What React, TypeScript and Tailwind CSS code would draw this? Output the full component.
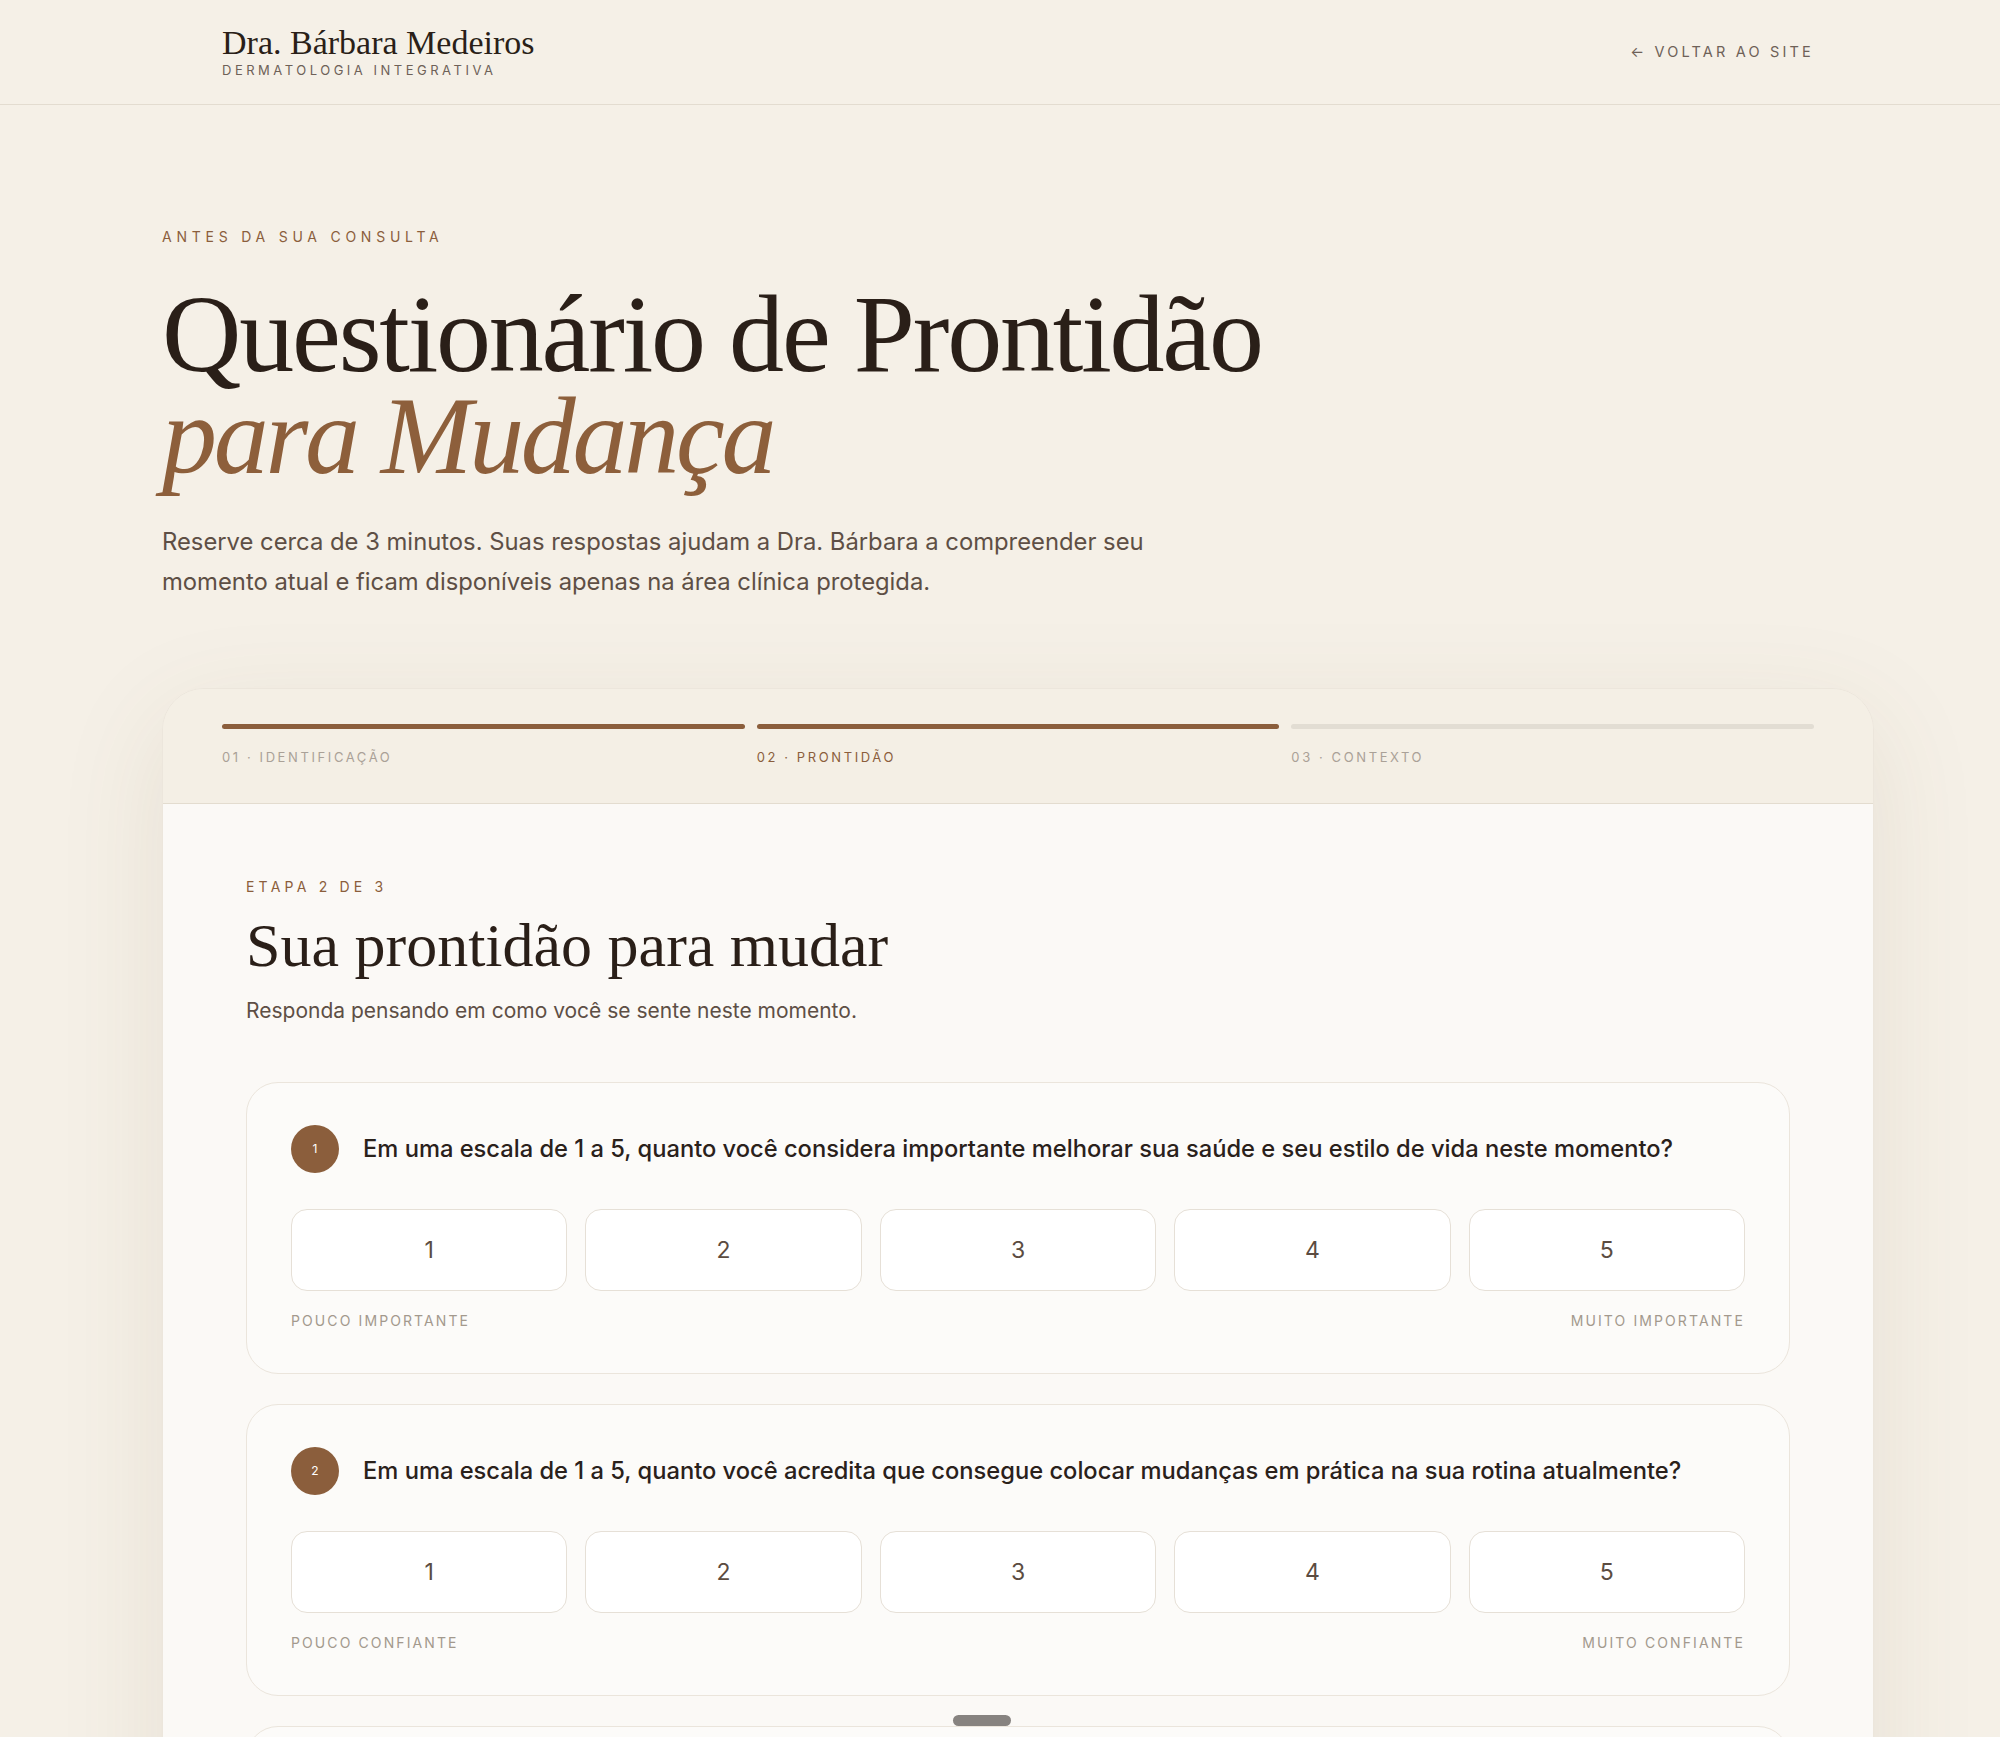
import React, { useState } from 'react';

const serif = "font-['Liberation_Serif','Times_New_Roman',serif]";

const steps = [
  { label: '01 · IDENTIFICAÇÃO', state: 'done' },
  { label: '02 · PRONTIDÃO', state: 'current' },
  { label: '03 · CONTEXTO', state: 'todo' },
];

const questions = [
  {
    id: 1,
    text: 'Em uma escala de 1 a 5, quanto você considera importante melhorar sua saúde e seu estilo de vida neste momento?',
    low: 'POUCO IMPORTANTE',
    high: 'MUITO IMPORTANTE',
  },
  {
    id: 2,
    text: 'Em uma escala de 1 a 5, quanto você acredita que consegue colocar mudanças em prática na sua rotina atualmente?',
    low: 'POUCO CONFIANTE',
    high: 'MUITO CONFIANTE',
  },
  {
    id: 3,
    text: 'Em uma escala de 1 a 5, quanto você se sente disposta a começar essas mudanças nas próximas semanas?',
    low: 'POUCO DISPOSTA',
    high: 'MUITO DISPOSTA',
  },
];

const ScaleQuestion = ({ q, value, onChange }) => (
  <div className="rounded-[32px] border border-[#ebe5dc] bg-[#fcfbf9] px-[44px] pt-[42px] pb-[43px]">
    {/* Question header */}
    <div className="flex items-center gap-[24px]">
      <span className="flex h-[48px] w-[48px] shrink-0 items-center justify-center rounded-full bg-[#8b5e3c] text-[12px] text-white">
        {q.id}
      </span>
      <p className="text-[23.7px] font-medium leading-[30px] text-[#2a211b]">{q.text}</p>
    </div>
    {/* Options 1..5 */}
    <div className="mt-[36px] grid grid-cols-5 gap-[18px]">
      {[1, 2, 3, 4, 5].map((n) => (
        <button
          key={n}
          type="button"
          onClick={() => onChange(n)}
          className={
            value === n
              ? 'h-[82px] rounded-[16px] border border-[#8b5e3c] bg-[#8b5e3c] text-[23px] text-white'
              : 'h-[82px] rounded-[16px] border border-[#e6e0d7] bg-white text-[23px] text-[#5b4c41]'
          }
        >
          {n}
        </button>
      ))}
    </div>
    <div className="mt-[21px] flex justify-between text-[14px] leading-[18px] tracking-[0.15em] text-[#a3998d]">
      <span>{q.low}</span>
      <span>{q.high}</span>
    </div>
  </div>
);

const App = () => {
  const [answers, setAnswers] = useState({});

  return (
    <div className="relative h-screen overflow-hidden bg-[#f5f0e7] font-['Inter','Liberation_Sans',sans-serif]">
      {/* Top bar */}
      <header className="border-b border-[#e3dcd0]">
        <div className="flex h-[104px] items-center justify-between pl-[222px] pr-[186px]">
          <div>
            <div className={`${serif} text-[34px] leading-[36px] text-[#2a1f18]`}>Dra. Bárbara Medeiros</div>
            <div className="text-[13px] leading-[18px] tracking-[0.27em] text-[#6e6158]">DERMATOLOGIA INTEGRATIVA</div>
          </div>
          <a href="#" className="text-[14.5px] tracking-[0.22em] text-[#6e6158]">
            ← VOLTAR AO SITE
          </a>
        </div>
      </header>

      <main className="pl-[162px] pr-[126px]">
        {/* Intro */}
        <section className="pt-[122px]">
          <p className="text-[14px] leading-[20px] tracking-[0.34em] text-[#8b5e3c]">ANTES DA SUA CONSULTA</p>
          <h1 className={`${serif} mt-[36px] text-[110px] leading-[102px] tracking-[-0.02em] text-[#2a1f18]`}>
            Questionário de Prontidão
            <br />
            <em className="tracking-[-0.03em] text-[#8d5f3b]">para Mudança</em>
          </h1>
          <p className="mt-[35px] max-w-[1060px] text-[23.8px] leading-[40px] text-[#5e4f45]">
            Reserve cerca de 3 minutos. Suas respostas ajudam a Dra. Bárbara a compreender seu momento atual e ficam
            disponíveis apenas na área clínica protegida.
          </p>
        </section>

        {/* Form card */}
        <div className="mt-[86px] overflow-hidden rounded-[42px] border border-[#ece6dc] shadow-[0_30px_110px_rgba(110,85,50,0.10)]">
          <div className="grid grid-cols-3 gap-[12px] border-b border-[#e3dccf] bg-[#f4efe5] px-[59px] pt-[35px] pb-[38px]">
            {steps.map((s) => (
              <div key={s.label}>
                <div
                  className={
                    s.state === 'todo' ? 'h-[5px] rounded-full bg-[#e2ddd3]' : 'h-[5px] rounded-full bg-[#8b5e3c]'
                  }
                />
                <div
                  className={
                    s.state === 'current'
                      ? 'mt-[20px] text-[13px] leading-[16px] tracking-[0.2em] text-[#8b5e3c]'
                      : 'mt-[20px] text-[13px] leading-[16px] tracking-[0.2em] text-[#aaa197]'
                  }
                >
                  {s.label}
                </div>
              </div>
            ))}
          </div>

          <div className="bg-[#fbf9f6] px-[83px] pt-[75px] pb-[80px]">
            <p className="text-[14px] leading-[16px] tracking-[0.3em] text-[#8b5e3c]">ETAPA 2 DE 3</p>
            <h2 className={`${serif} mt-[16px] text-[62px] leading-[68px] text-[#2a1f18]`}>Sua prontidão para mudar</h2>
            <p className="mt-[18px] text-[21px] leading-[28px] text-[#5e4f45]">
              Responda pensando em como você se sente neste momento.
            </p>

            <div className="mt-[57px] flex flex-col gap-[30px]">
              {questions.map((q) => (
                <ScaleQuestion
                  key={q.id}
                  q={q}
                  value={answers[q.id]}
                  onChange={(n) => setAnswers((prev) => ({ ...prev, [q.id]: n }))}
                />
              ))}
            </div>
          </div>
        </div>
      </main>

      {/* Scroll handle */}
      <div className="absolute bottom-[11px] left-[953px] h-[11px] w-[58px] rounded-full bg-[#878380]" />
    </div>
  );
};

export default App;
